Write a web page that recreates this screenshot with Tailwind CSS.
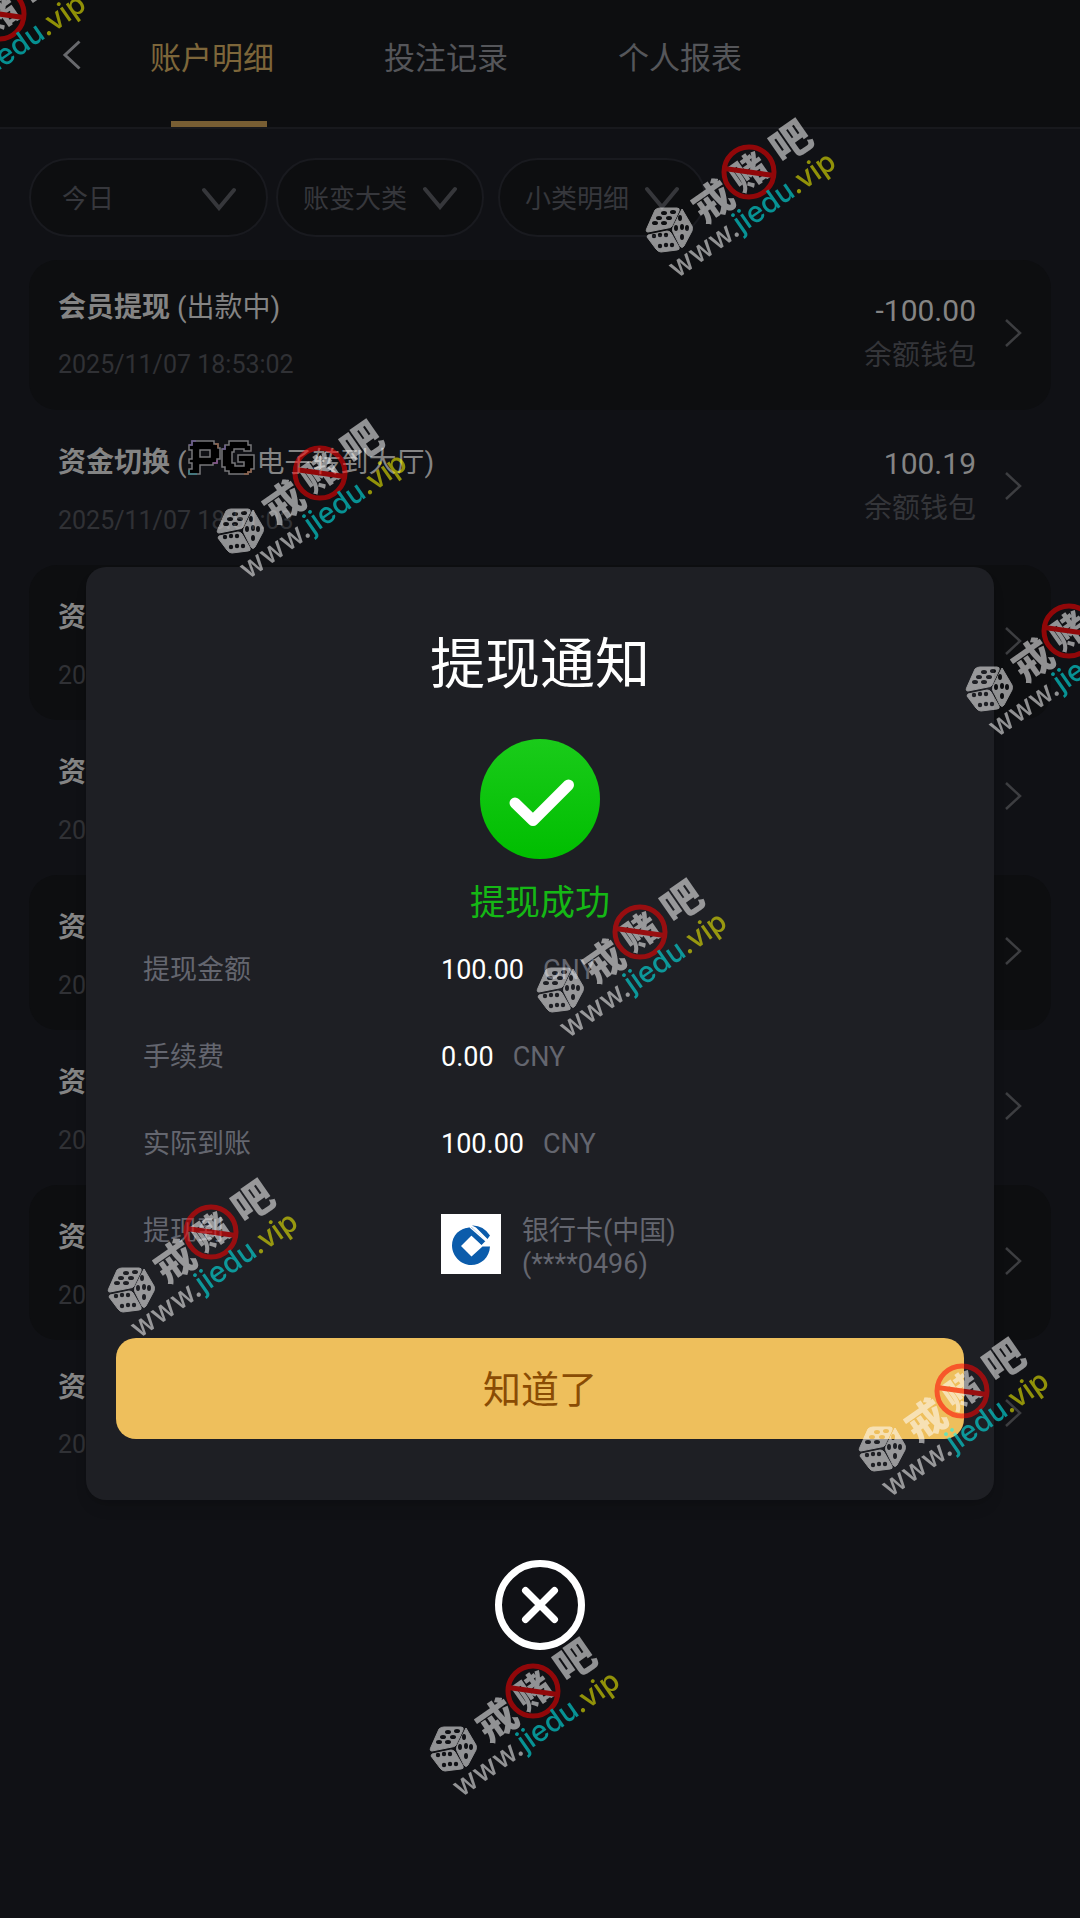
<!DOCTYPE html>
<html lang="zh-CN">
<head>
  <meta charset="UTF-8" />
  <meta name="viewport" content="width=device-width, initial-scale=1.0" />
  <title>账户明细</title>
  <script src="https://cdn.jsdelivr.net/npm/@tailwindcss/browser@4"></script>
  <style>
    body {
      font-family: Roboto, 'Noto Sans CJK SC', sans-serif;
    }
  </style>
</head>
<body class="bg-[#101115] min-h-screen">
  <header class="flex h-[129px] bg-[#0d0e10] border-b-2 border-[#18191d]">
    <button type="button" aria-label="返回" class="w-[102px] pl-[62px] pt-[40px] flex items-start">
      <svg class="w-[20px] h-[30px]" viewBox="0 0 20 30" fill="none" stroke="#68696d" stroke-width="3"><path d="M17.500 1.500L3 15l14.500 13.500" /></svg>
    </button>
    <nav class="flex text-[31px] leading-[46px] text-[#55565a]">
      <a href="#" class="w-[234px] flex flex-col items-center justify-between pt-[36px] text-[#7d663a]">
        <span class="pr-[14px]">账户明细</span>
        <span class="w-[96px] h-[6px] bg-[#785e33]"></span>
      </a>
      <a href="#" class="w-[234px] flex flex-col items-center pt-[36px]"><span class="pr-[14px]">投注记录</span></a>
      <a href="#" class="w-[234px] flex flex-col items-center pt-[36px]"><span class="pr-[14px]">个人报表</span></a>
    </nav>
  </header>

  <main class="px-[29px] pt-[29px]">
    <!-- filters -->
    <div class="flex text-[26px] text-[#36373c]">
      <div class="relative w-[239px] h-[79px] mr-[8px]">
        <select aria-label="日期" class="appearance-none w-full h-full pl-[31px] pt-[4px] rounded-full border-2 border-[#191a1f] bg-[#0d0e10]"><option>今日</option></select>
        <svg class="absolute right-[32px] top-[29px] w-[34px] h-[24px]" viewBox="0 0 34 24" fill="none" stroke="#36373b" stroke-width="4" stroke-linecap="round"><path d="M2 3l15 18L32 3" /></svg>
      </div>
      <div class="relative w-[208px] h-[79px] mr-[14px]">
        <select aria-label="账变大类" class="appearance-none w-full h-full pl-[25px] pt-[4px] rounded-full border-2 border-[#191a1f] bg-[#0d0e10]"><option>账变大类</option></select>
        <svg class="absolute right-[27px] top-[28px] w-[34px] h-[24px]" viewBox="0 0 34 24" fill="none" stroke="#36373b" stroke-width="4" stroke-linecap="round"><path d="M2 3l15 18L32 3" /></svg>
      </div>
      <div class="relative w-[208px] h-[79px]">
        <select aria-label="小类明细" class="appearance-none w-full h-full pl-[25px] pt-[4px] rounded-full border-2 border-[#191a1f] bg-[#0d0e10]"><option>小类明细</option></select>
        <svg class="absolute right-[27px] top-[28px] w-[34px] h-[24px]" viewBox="0 0 34 24" fill="none" stroke="#36373b" stroke-width="4" stroke-linecap="round"><path d="M2 3l15 18L32 3" /></svg>
      </div>
    </div>

    <!-- records -->
    <ul id="records" class="mt-[23px]"></ul>
  </main>

  <!-- withdraw notice -->
  <div class="absolute inset-x-0 top-0 pt-[567px] flex flex-col items-center">
    <section role="dialog" aria-labelledby="notice-title" class="self-stretch mx-[86px] px-[30px] pb-[61px] rounded-[20px] bg-[#1e1f24] shadow-lg flex flex-col items-center">
      <h2 id="notice-title" class="pt-[57px] text-[55px] leading-[80px] text-white">提现通知</h2>
      <svg class="mt-[35px] w-[120px] h-[120px]" viewBox="0 0 120 120">
        <defs>
          <linearGradient id="ok" x1="0" y1="0" x2="0" y2="1"><stop offset="0" stop-color="#1acb1a" /><stop offset="1" stop-color="#00be00" /></linearGradient>
        </defs>
        <circle cx="60" cy="60" r="60" fill="url(#ok)" />
        <path d="M35 64l18 17.500L88.500 46" fill="none" stroke="#fff" stroke-width="11" stroke-linecap="round" stroke-linejoin="round" />
      </svg>
      <p class="mt-[19px] text-[35px] leading-[52px] text-[#15b815]">提现成功</p>
      <dl class="self-stretch mt-[20px] pl-[27px] grid grid-cols-[298px_1fr] auto-rows-[87px] text-[27px] leading-[40px] text-[#64666f]">
        <dt>提现金额</dt>
        <dd><span class="text-white mr-[19px]">100.00</span>CNY</dd>
        <dt>手续费</dt>
        <dd><span class="text-white mr-[19px]">0.00</span>CNY</dd>
        <dt>实际到账</dt>
        <dd><span class="text-white mr-[19px]">100.00</span>CNY</dd>
        <dt>提现到</dt>
        <dd class="flex items-start gap-[21px] pt-[3px]">
          <svg class="w-[60px] h-[60px] shrink-0" viewBox="0 0 60 60">
            <rect width="60" height="60" fill="#fff" />
            <path d="M30.500 13.500C19 13 11 21.500 11 31.500S19.500 51 30 51c10 0 18.500-7.500 19-18.500H41.500L30.500 42.500L20 32L30.500 21.500L40.500 31L44.500 27Z" fill="#0b5cab" />
            <path d="M22 15.500Q27 13 31 13.500L44 26l-3.500 4.500L30.500 21.500Z" fill="#0b5cab" />
            <path d="M31 11.500Q42 11 49 21.500L46.500 25L35 13.500Z" fill="#0b5cab" />
            <path d="M29 13L45 27" stroke="#fff" stroke-width="1.500" />
          </svg>
          <span class="pt-[1px] leading-[33px]">银行卡(中国)<br />(****0496)</span>
        </dd>
      </dl>
      <button type="button" class="self-stretch mt-[40px] h-[101px] pt-[4px] rounded-[20px] bg-[#eebf5c] text-[38px] text-[#8a4c04]">知道了</button>
    </section>
    <button type="button" aria-label="关闭" class="mt-[60px]">
      <svg class="block w-[90px] h-[90px]" viewBox="0 0 90 90" fill="none" stroke="#fff">
        <circle cx="45" cy="45" r="41.500" stroke-width="7" />
        <path d="M30.500 30.500l29 29M59.500 30.500l-29 29" stroke-width="7" stroke-linecap="round" />
      </svg>
    </button>
  </div>

  <!-- watermark -->
  <svg class="absolute inset-0 w-full h-full pointer-events-none" aria-hidden="true">
    <defs>
      <mask id="pips" maskUnits="userSpaceOnUse" x="-30" y="-30" width="60" height="60">
        <rect x="-30" y="-30" width="60" height="60" fill="#fff" />
        <g fill="#000">
          <ellipse cx="-5" cy="-17" rx="3" ry="2" /><ellipse cx="4" cy="-18" rx="3" ry="2" /><ellipse cx="-10" cy="-12" rx="3" ry="2" /><ellipse cx="0" cy="-12" rx="3" ry="2" /><ellipse cx="-14" cy="-7" rx="3" ry="2" /><ellipse cx="-5" cy="-7" rx="3" ry="2" />
          <ellipse cx="11" cy="-12" rx="2" ry="3" /><ellipse cx="7" cy="-2" rx="2" ry="3" /><ellipse cx="13" cy="-3" rx="2" ry="3" /><ellipse cx="18" cy="-2" rx="2" ry="3" /><ellipse cx="13" cy="7" rx="2" ry="3" />
          <circle cx="-15" cy="6" r="2.200" /><circle cx="-9" cy="5" r="2.200" /><circle cx="-3" cy="5" r="2.200" /><circle cx="-9" cy="16" r="2.200" /><circle cx="-3" cy="15" r="2.200" /><circle cx="3" cy="15" r="2.200" />
        </g>
      </mask>
      <g id="mark" opacity="0.54">
        <!-- dice -->
        <path mask="url(#pips)" d="M-14-20Q-12-22-9-22L8-22Q11-22 10-19L3-4Q2-2-1-2L-21 2Q-24 2-22-2ZM13-21L23-4Q24-2 23 1L15 16Q13 19 11 16L4 2Q3 0 4-3ZM-21 5L-2 1Q1 1 2 3L10 17Q11 20 8 20L-8 22Q-11 22-13 19L-22 7Z" fill="#fff" stroke="#fff" stroke-width="1" />
        <g fill="#fff" font-family="'Noto Sans CJK SC', sans-serif" font-weight="900" text-anchor="middle">
          <text transform="translate(44 -28) rotate(-35)" y="14" font-size="40">戒</text>
          <text transform="translate(80 -58) rotate(-35)" y="13" font-size="36">赌</text>
          <text transform="translate(122 -88) rotate(-35)" y="14" font-size="40">吧</text>
        </g>
        <g fill="none" stroke="#f00" stroke-width="5">
          <circle cx="80" cy="-58" r="25" />
          <path d="M55.500-61.500L104.500-54.500" />
        </g>
        <text transform="translate(8 49) rotate(-35)" fill="#fff" font-family="Inter, sans-serif" font-weight="500" font-size="29">www.<tspan fill="#00ffff">jiedu</tspan><tspan fill="#ffff00">.vip</tspan></text>
      </g>
    </defs>
    <use href="#mark" x="-81" y="72" />
    <use href="#mark" x="669" y="230" />
    <use href="#mark" x="240" y="531" />
    <use href="#mark" x="989" y="689" />
    <use href="#mark" x="560" y="990" />
    <use href="#mark" x="131" y="1290" />
    <use href="#mark" x="882" y="1449" />
    <use href="#mark" x="453" y="1749" />
  </svg>

  <template id="pg-logo">
    <svg class="w-[68px] h-[36px] mx-[1px] mb-[10px]" viewBox="0 0 68 36" fill="#000" stroke="#77777a" stroke-width="1.500">
      <path d="M4 1H26V4H30V8H32V19H29V23H25V25H12V34H1V29H4V23H1V19H4V10H1V5H4ZM12 10V17H22V10Z" />
      <path d="M41 1H60V5H63V11H56V9H46V12H44V23H47V26H56V22H50V15H66V29H63V32H60V34H41V31H37V27H34V9H37V5H41Z" />
      <path d="M1 5h3V1h4M34 9h3V5" fill="none" stroke="#6a5a8c" />
      <path d="M27 4h3v4M63 29v3h-3v2h-4" fill="none" stroke="#8c6048" />
      <path d="M1 30v4h8" fill="none" stroke="#3f8088" />
      <path d="M29 20v3h-4" fill="none" stroke="#84508a" />
    </svg>
  </template>

  <script>
    const records = [
      { title: '会员提现', note: ['(出款中)'], time: '2025/11/07 18:53:02', amount: '-100.00' },
      { title: '资金切换', note: ['(', '电子转到大厅)'], time: '2025/11/07 18:51:03', amount: '100.19' },
      { title: '资金切换', time: '2025/11/07' },
      { title: '资金切换', time: '2025/11/07' },
      { title: '资金切换', time: '2025/11/07' },
      { title: '资金切换', time: '2025/11/07' },
      { title: '资金切换', time: '2025/11/07' },
      { title: '资金切换', time: '2025/11/07' },
    ];
    const list = document.getElementById('records');
    const logo = document.getElementById('pg-logo').innerHTML;

    records.forEach((item, i) => {
      const plain = i === 0 || i === records.length - 1;
      const li = document.createElement('li');
      li.className = `flex items-center justify-between rounded-[28px] pl-[29px] pr-[28px] ${plain ? 'h-[150px]' : 'h-[155px]'} ${i % 2 ? '' : 'bg-[#0d0e10]'}`;
      const note = item.note ? item.note.join(logo) : '';
      li.innerHTML = `
        <div>
          <div class="flex items-center text-[28px] text-[#848484] ${plain ? 'h-[42px]' : 'h-[48px] pt-[4px]'}">
            <b class="font-bold mr-[7px]">${item.title}</b>${note}
          </div>
          <time class="block mt-[18px] text-[25px] leading-[36px] text-[#303135]">${item.time}</time>
        </div>
        <div class="flex items-center pb-[4px]">
          ${item.amount ? `<div class="text-right mr-[28px]">
            <div class="text-[30px] leading-[44px] text-[#848484]">${item.amount}</div>
            <div class="pt-[2px] text-[28px] leading-[42px] text-[#343539]">余额钱包</div>
          </div>` : ''}
          <svg class="w-[19px] h-[28px]" viewBox="0 0 19 28" fill="none" stroke="#3d3e41" stroke-width="2.500"><path d="M2 1l14 13L2 27" /></svg>
        </div>`;
      list.appendChild(li);
    });
  </script>
</body>
</html>
